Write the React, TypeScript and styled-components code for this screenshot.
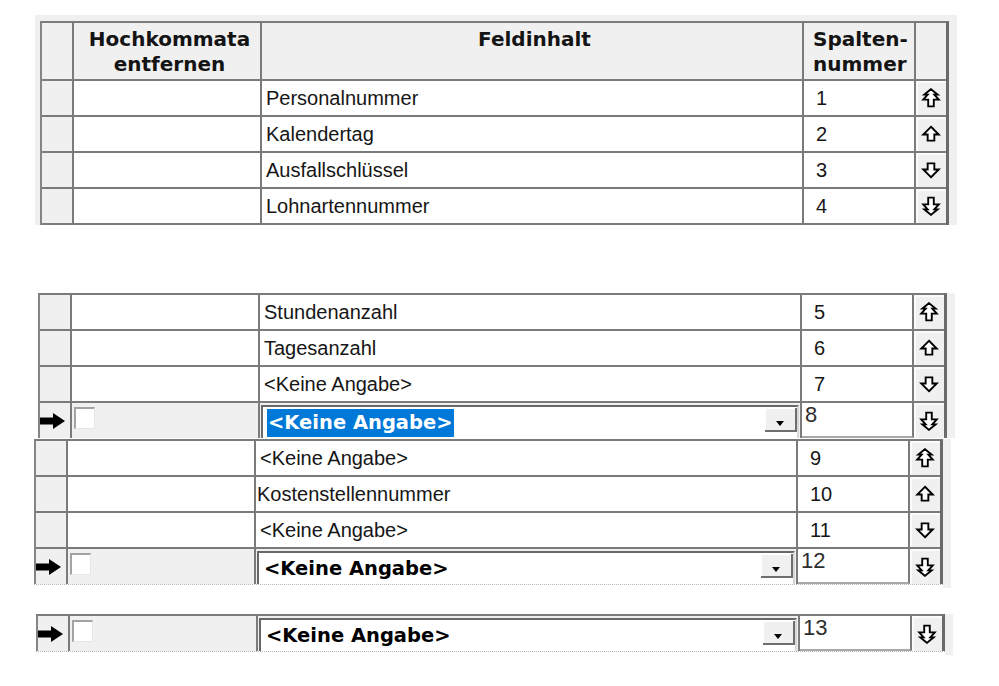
import React from "react";
import styled, { createGlobalStyle, css } from "styled-components";

type MoveKind = "top" | "up" | "down" | "bottom";

type GridRow = {
  nr: number;
  field: string;
  move: MoveKind;
  active?: boolean;
  selected?: boolean;
  tight?: boolean;
};

const GlobalStyle = createGlobalStyle`
  html, body {
    margin: 0;
    padding: 0;
    background: #ffffff;
  }
  body {
    width: 999px;
    height: 686px;
    overflow: hidden;
    font-family: "Liberation Sans", Arial, sans-serif;
  }
`;

const LINE = "#7b7b7b";
const FACE = "#f0f0f0";

const MoveIcon = ({ kind }: { kind: MoveKind }) => {
  const paths: Record<MoveKind, string> = {
    top: "M9 1 L15 6 H12 L16 10.5 H11.5 V16.5 H6.5 V10.5 H2 L6 6 H3 Z",
    up: "M9 2.5 L16 9.5 H12 V15 H6 V9.5 H2 Z",
    down: "M9 15.5 L16 8.5 H12 V3 H6 V8.5 H2 Z",
    bottom: "M9 17 L15 12 H12 L16 7.5 H11.5 V1.5 H6.5 V7.5 H2 L6 12 H3 Z",
  };
  return (
    <svg width="20" height="20" viewBox="0 0 18 18">
      <path
        d={paths[kind]}
        fill="#ffffff"
        stroke="#000000"
        strokeWidth="1.7"
        strokeLinejoin="miter"
      />
    </svg>
  );
};

const RowArrow = () => (
  <svg width="26" height="16" viewBox="0 0 26 16">
    <path d="M0 4.5 H13 V0 L25 8 L13 16 V11.5 H0 Z" fill="#000000" />
  </svg>
);

const Panel = styled.div<{ $left: number; $top: number; $frame?: boolean }>`
  width: fit-content;
  margin: ${({ $top }) => $top}px 0 0 ${({ $left }) => $left}px;
  padding: ${({ $frame }) => ($frame ? "6px 8px 0 5px" : "0 8px 0 0")};
  background: ${FACE};
`;

const Grid = styled.div`
  display: grid;
  grid-template-columns: 32px 188px 542px 112px 30px;
  border-left: 2px solid #858585;
  border-right: 3px solid #6a6a6a;
  border-top: 2px solid ${LINE};
  background: #ffffff;
  color: #161616;
  font-size: 20px;
`;

const cellBase = css<{ $active?: boolean }>`
  box-sizing: border-box;
  height: ${({ $active }) => ($active ? 35 : 36)}px;
  border-bottom: ${({ $active }) => ($active ? "none" : `2px solid ${LINE}`)};
  border-right: 2px solid ${LINE};
  display: flex;
  align-items: center;
  white-space: nowrap;
  overflow: hidden;
`;

const HeadCell = styled.div<{ $align?: string; $last?: boolean }>`
  box-sizing: border-box;
  height: 58px;
  background: ${FACE};
  border-bottom: 2px solid ${LINE};
  border-right: ${({ $last }) => ($last ? "none" : `2px solid ${LINE}`)};
  padding: 4px 4px 0 9px;
  text-align: ${({ $align }) => $align || "center"};
  font-family: "DejaVu Sans", Verdana, sans-serif;
  font-weight: bold;
  font-size: 20px;
  line-height: 25px;
  color: #141414;
`;

const RowHead = styled.div<{ $active?: boolean }>`
  ${cellBase};
  background: ${FACE};
  justify-content: flex-start;
  padding-left: 0;
`;

const CheckCell = styled.div<{ $active?: boolean }>`
  ${cellBase};
  background: ${({ $active }) => ($active ? FACE : "#ffffff")};
  padding-left: 2px;
`;

const CheckBox = styled.span`
  box-sizing: border-box;
  width: 21px;
  height: 22px;
  margin-top: -6px;
  background: #ffffff;
  border-top: 2px solid #a3a3a3;
  border-left: 2px solid #a3a3a3;
  border-right: 1px solid #e6e6e6;
  border-bottom: 1px solid #e6e6e6;
`;

const FieldCell = styled.div<{ $active?: boolean; $tight?: boolean }>`
  ${cellBase};
  background: ${({ $active }) => ($active ? FACE : "#ffffff")};
  padding: ${({ $active, $tight }) =>
    $active ? "2px 1px 0 1px" : `0 0 0 ${$tight ? 1 : 4}px`};
  align-items: ${({ $active }) => ($active ? "stretch" : "center")};
`;

const Combo = styled.div`
  flex: 1;
  display: flex;
  background: #ffffff;
  border-top: 2px solid #686868;
  border-left: 2px solid #686868;
  border-right: 2px solid #d8d8d8;
`;

const ComboText = styled.div<{ $selected?: boolean }>`
  flex: 1;
  display: flex;
  align-items: center;
  padding-left: 4px;
  font-family: "DejaVu Sans", Verdana, sans-serif;
  font-weight: bold;
  font-size: 19.5px;

  span {
    padding: 2px 1px 3px;
    background: ${({ $selected }) => ($selected ? "#0078d7" : "transparent")};
    color: ${({ $selected }) => ($selected ? "#ffffff" : "#000000")};
  }
`;

const DropButton = styled.div`
  box-sizing: border-box;
  width: 32px;
  height: 24px;
  margin-top: 1px;
  background: ${FACE};
  border-right: 2px solid #6e6e6e;
  border-bottom: 2px solid #6e6e6e;
  box-shadow: inset 1px 1px 0 #ffffff;
  display: flex;
  justify-content: center;
  align-items: flex-end;
  padding-bottom: 4px;

  &::after {
    content: "";
    border-top: 5px solid #000000;
    border-left: 4px solid transparent;
    border-right: 4px solid transparent;
  }
`;

const NumCell = styled.div<{ $active?: boolean }>`
  ${cellBase};
  background: #ffffff;
  padding-left: ${({ $active }) => ($active ? 3 : 12)}px;
  align-items: ${({ $active }) => ($active ? "flex-start" : "center")};
  padding-top: 0;
  font-size: ${({ $active }) => ($active ? 22 : 20)}px;
  line-height: ${({ $active }) => ($active ? "24px" : "normal")};
  color: ${({ $active }) => ($active ? "#2e2e2e" : "#161616")};
  border-bottom: ${({ $active }) =>
    $active ? "2px solid #a8a8a8" : `2px solid ${LINE}`};
`;

const MoveCell = styled.div<{ $active?: boolean }>`
  ${cellBase};
  border-right: none;
  background: ${FACE};
  box-shadow: inset 2px 2px 0 #fbfbfb;
  justify-content: center;
`;

const Tail = styled.div`
  height: 3px;
  border-top: 1px dotted #b5b5b5;
  background: #ffffff;
`;

const Page = styled.div`
  display: flex;
  flex-direction: column;
`;

const HeaderRow = () => (
  <>
    <HeadCell />
    <HeadCell>
      Hochkommata
      <br />
      entfernen
    </HeadCell>
    <HeadCell>Feldinhalt</HeadCell>
    <HeadCell $align="left">
      Spalten-
      <br />
      nummer
    </HeadCell>
    <HeadCell $last />
  </>
);

const DataRow = ({ row }: { row: GridRow }) => {
  if (row.active) {
    return (
      <>
        <RowHead $active>
          <RowArrow />
        </RowHead>
        <CheckCell $active>
          <CheckBox />
        </CheckCell>
        <FieldCell $active>
          <Combo>
            <ComboText $selected={row.selected}>
              <span>{row.field}</span>
            </ComboText>
            <DropButton />
          </Combo>
        </FieldCell>
        <NumCell $active>{row.nr}</NumCell>
        <MoveCell $active>
          <MoveIcon kind={row.move} />
        </MoveCell>
      </>
    );
  }
  return (
    <>
      <RowHead />
      <CheckCell />
      <FieldCell $tight={row.tight}>{row.field}</FieldCell>
      <NumCell>{row.nr}</NumCell>
      <MoveCell>
        <MoveIcon kind={row.move} />
      </MoveCell>
    </>
  );
};

const firstRows: GridRow[] = [
  { nr: 1, field: "Personalnummer", move: "top" },
  { nr: 2, field: "Kalendertag", move: "up" },
  { nr: 3, field: "Ausfallschlüssel", move: "down" },
  { nr: 4, field: "Lohnartennummer", move: "bottom" },
];

const secondRows: GridRow[] = [
  { nr: 5, field: "Stundenanzahl", move: "top" },
  { nr: 6, field: "Tagesanzahl", move: "up" },
  { nr: 7, field: "<Keine Angabe>", move: "down" },
  { nr: 8, field: "<Keine Angabe>", move: "bottom", active: true, selected: true },
];

const thirdRows: GridRow[] = [
  { nr: 9, field: "<Keine Angabe>", move: "top" },
  { nr: 10, field: "Kostenstellennummer", move: "up", tight: true },
  { nr: 11, field: "<Keine Angabe>", move: "down" },
  { nr: 12, field: "<Keine Angabe>", move: "bottom", active: true },
];

const lastRows: GridRow[] = [
  { nr: 13, field: "<Keine Angabe>", move: "bottom", active: true },
];

const App: React.FC = () => {
  return (
    <Page>
      <GlobalStyle />
      <Panel $left={35} $top={15} $frame>
        <Grid>
          <HeaderRow />
          {firstRows.map((row) => (
            <DataRow key={row.nr} row={row} />
          ))}
        </Grid>
      </Panel>

      <Panel $left={38} $top={68}>
        <Grid>
          {secondRows.map((row) => (
            <DataRow key={row.nr} row={row} />
          ))}
        </Grid>
      </Panel>

      <Panel $left={34} $top={1}>
        <Grid>
          {thirdRows.map((row) => (
            <DataRow key={row.nr} row={row} />
          ))}
        </Grid>
        <Tail />
      </Panel>

      <Panel $left={36} $top={26}>
        <Grid>
          {lastRows.map((row) => (
            <DataRow key={row.nr} row={row} />
          ))}
        </Grid>
        <Tail />
      </Panel>
    </Page>
  );
};

export default App;
